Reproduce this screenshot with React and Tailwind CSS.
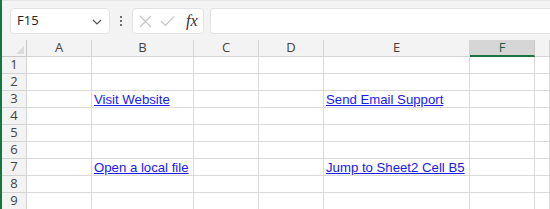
import React from 'react';

const cols = ['A', 'B', 'C', 'D', 'E', 'F', ''];
const links = {
  3: { B: 'Visit Website', E: 'Send Email Support' },
  7: { B: 'Open a local file', E: 'Jump to Sheet2 Cell B5' },
};

export default function App() {
  const rows = [1, 2, 3, 4, 5, 6, 7, 8, 9];
  return (
    <div
      className="w-[550px] h-[209px] overflow-hidden bg-white border-l-2 border-[#1e7145] text-[13px] text-[#333]"
      style={{ fontFamily: '"Liberation Sans", Arial, sans-serif' }}
    >
      {/* formula bar */}
      <div className="h-[40px] bg-[#f3f3f3] flex items-start pt-[7px] pl-[8px] border-t border-[#e6e6e6]">
        <div className="w-[100px] h-[26px] bg-white rounded-[4px] border border-[#e3e3e3] flex items-center justify-between pl-[6px] pr-[7px]">
          <span className="text-[13px] text-[#222]" style={{ fontFamily: '"Open Sans", sans-serif' }}>F15</span>
          <svg width="10" height="6" viewBox="0 0 10 6" className="mt-[1px]">
            <path d="M1 1 L5 5 L9 1" fill="none" stroke="#555" strokeWidth="1.2" />
          </svg>
        </div>
        <div className="w-[22px] h-[26px] flex flex-col items-center justify-center gap-[2px]">
          <span className="w-[2px] h-[2px] bg-[#444] rounded-full" />
          <span className="w-[2px] h-[2px] bg-[#444] rounded-full" />
          <span className="w-[2px] h-[2px] bg-[#444] rounded-full" />
        </div>
        <div className="w-[72px] h-[26px] bg-white rounded-[4px] border border-[#e3e3e3] flex items-center pl-[6px] gap-[8px]">
          <svg width="13" height="13" viewBox="0 0 13 13">
            <path d="M1 1 L12 12 M12 1 L1 12" stroke="#c4c4c4" strokeWidth="1.1" />
          </svg>
          <svg width="15" height="12" viewBox="0 0 15 12">
            <path d="M1 6 L5.5 10.5 L14 1.5" fill="none" stroke="#c4c4c4" strokeWidth="1.1" />
          </svg>
          <span
            className="italic text-[16px] text-[#333] ml-[3px] leading-none"
            style={{ fontFamily: '"Liberation Serif", "Times New Roman", serif' }}
          >
            fx
          </span>
        </div>
        <div className="flex-1 h-[26px] ml-[6px] bg-white rounded-l-[4px] border border-r-0 border-[#e3e3e3]" />
      </div>

      {/* grid */}
      <div className="grid grid-cols-[25px_65px_102px_65px_65px_146px_65px_1fr]">
        <div className="h-[17px] bg-[#f3f3f3] border-r border-b border-[#c8c8c8] relative">
          <svg width="8" height="8" viewBox="0 0 8 8" className="absolute right-[2px] bottom-[2px]">
            <path d="M8 0 L8 8 L0 8 Z" fill="#dcdcdc" />
          </svg>
        </div>
        {cols.map((c) => (
          <div
            key={c || 'x'}
            className={
              c === 'F'
                ? 'h-[17px] bg-[#d6d6d6] border-r border-b-2 border-r-[#c8c8c8] border-b-[#1e7145] flex items-center justify-center text-[#1e5c3a]'
                : 'h-[17px] bg-[#f3f3f3] border-r border-b border-[#d4d4d4] flex items-center justify-center text-[#444]'
            }
            style={{ fontFamily: '"Open Sans", sans-serif', fontSize: 13 }}
          >
            {c}
          </div>
        ))}
        {rows.map((r) => (
          <React.Fragment key={r}>
            <div
              className="h-[17px] bg-[#f3f3f3] border-r border-b border-[#d4d4d4] flex items-center justify-center text-[#444]"
              style={{ fontFamily: '"Open Sans", sans-serif', fontSize: 13 }}
            >
              {r}
            </div>
            {cols.map((c) => (
              <div
                key={c || 'x'}
                className="h-[17px] border-r border-b border-[#dadada] flex items-end pl-[2px] whitespace-nowrap overflow-visible"
              >
                {links[r] && links[r][c] && (
                  <span className="text-[#1a1ae6] underline leading-[15px] text-[13.2px]">{links[r][c]}</span>
                )}
              </div>
            ))}
          </React.Fragment>
        ))}
      </div>
    </div>
  );
}
